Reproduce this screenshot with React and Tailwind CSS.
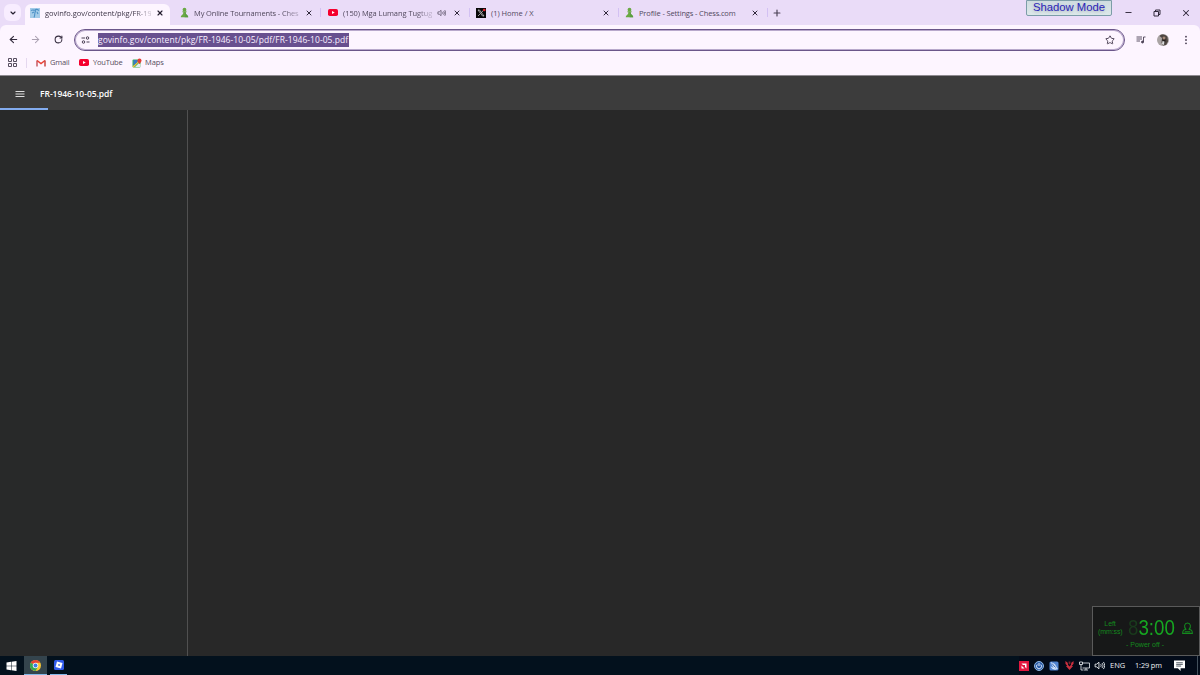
import React from "react";
import { X, Plus, ArrowLeft, ArrowRight, RotateCw, ChevronDown, Star, Minus } from "lucide-react";

const PawnIcon = () => (
  <svg viewBox="0 0 10 12" className="h-[11px] w-[9px] shrink-0">
    <circle cx="5" cy="2.900" r="2.100" fill="#6aa944" />
    <path d="M2.700 4.700h4.600v1H6.300c0 1.600.6 2.500 1.500 3.200.8.600 1.300 1.200 1.300 2.500H.9c0-1.300.5-1.900 1.300-2.500.9-.7 1.500-1.600 1.500-3.200h-1z" fill="#6aa944" />
    <path d="M6.300 5.700c0 1.600.6 2.500 1.500 3.200.8.600 1.300 1.200 1.300 2.500H5c1.500-1 1-3 .3-5.700z" fill="#5a9d40" />
  </svg>
);

const YoutubeIcon = () => (
  <svg viewBox="0 0 20 14" className="h-[7px] w-[10px] shrink-0" preserveAspectRatio="none">
    <rect width="20" height="14" rx="3.500" fill="#f5002e" />
    <path d="M8 4l5.500 3L8 10z" fill="#fff" />
  </svg>
);

const GovinfoIcon = () => (
  <svg viewBox="0 0 10 10" className="h-[10px] w-[10px] shrink-0">
    <rect width="10" height="10" fill="#a3cbe8" />
    <path d="M1 2.500c2-1.500 3 .5 4-.5s2-1 4 .5M6 2.500C4 4.500 5.500 6 4 9.500M2 5l2-1M7 4l1 2" fill="none" stroke="#4c91c6" strokeWidth="1.100" />
  </svg>
);

const XLogo = () => (
  <svg viewBox="0 0 20 20" className="h-[10px] w-[10px] shrink-0">
    <rect width="20" height="20" fill="#080808" />
    <path d="M4 4h3l9 12h-3zM15.500 4l-5 5.500M8.500 11.500L4 16" fill="none" stroke="#d8d8d8" strokeWidth="1.400" />
    <circle cx="16.500" cy="4" r="2.600" fill="#e5202d" />
  </svg>
);

const SpeakerIcon = ({ className }) => (
  <svg viewBox="0 0 20 16" className={className} fill="none" stroke="currentColor" strokeWidth="1.600">
    <path d="M2 5.500h3L9 2v12L5 10.500H2z" />
    <path d="M12 5.500c1.300 1.500 1.300 3.500 0 5M14.500 3.500c2.500 2.500 2.500 6.500 0 9M17 1.500c3.300 3.500 3.300 9.500 0 13" />
  </svg>
);

const tabs = [
  { icon: PawnIcon, title: "My Online Tournaments - Ches", box: "w-[150px] pl-[9px] pr-[7px]", spacing: "tracking-[-0.12px]", fade: true },
  { icon: YoutubeIcon, title: "(150) Mga Lumang Tugtugi", box: "w-[148px] pl-[7px] pr-[8px]", spacing: "tracking-[-0.06px]", fade: true, audio: true },
  { icon: XLogo, title: "(1) Home / X", box: "w-[148px] pl-[6px] pr-[8px]", spacing: "tracking-[-0.02px]" },
  { icon: PawnIcon, title: "Profile - Settings - Chess.com", box: "w-[148px] pl-[5px] pr-[8px]", spacing: "tracking-[-0.14px]" },
];

const Tab = ({ tab }) => {
  const Icon = tab.icon;
  return (
    <div className={`flex h-[25px] shrink-0 items-center ${tab.box}`}>
      <span className="flex w-[10px] shrink-0 justify-center"><Icon /></span>
      <div className={`ml-[5px] min-w-0 flex-1 whitespace-nowrap leading-4 ${tab.spacing} ${tab.fade ? "[mask-image:linear-gradient(to_right,black_82%,rgba(0,0,0,0.3)_97%)]" : ""}`}>
        {tab.title}
      </div>
      {tab.audio && <SpeakerIcon className="ml-[5px] mr-[4px] h-[8px] w-[9px] shrink-0" />}
      <X size={8} strokeWidth={3} className="ml-[3px] shrink-0 text-[#30283b]" />
    </div>
  );
};

const TabStrip = () => (
  <header className="relative flex h-[25px] shrink-0 bg-[#eadcf8] text-[7.5px] text-[#51485d]">
    <div className="flex w-[25px] shrink-0 items-center justify-center">
      <div className="flex h-[17px] w-[17px] items-center justify-center rounded-[6px] bg-[#f8edff]">
        <ChevronDown size={8} strokeWidth={3.500} className="text-[#251f30]" />
      </div>
    </div>
    <div className="mt-1 flex h-[21px] w-[145px] shrink-0 items-center rounded-t-[6px] bg-[#fdf5ff] pb-[3px] pl-[5px] pr-[6px] text-[#3b3345]">
      <GovinfoIcon />
      <div className="ml-[5px] w-[106px] whitespace-nowrap leading-4 tracking-[-0.02px] [mask-image:linear-gradient(to_right,black_84%,rgba(0,0,0,0.3)_97%)]">
        govinfo.gov/content/pkg/FR-19
      </div>
      <X size={8} strokeWidth={3.500} className="ml-auto shrink-0 text-[#251f30]" />
    </div>
    {tabs.map((tab) => (
      <React.Fragment key={tab.title}>
        <Tab tab={tab} />
        <div className="mt-2 h-[9px] w-px shrink-0 bg-[#d3c1f3]" />
      </React.Fragment>
    ))}
    <Plus size={10} strokeWidth={2.800} className="ml-[4px] mt-[8px] text-[#4b4155]" />
    <div className="absolute left-[1026px] top-0 flex h-4 w-[86px] items-center justify-center rounded-b-[2px] border border-[#7c9da8] bg-gradient-to-b from-[#cfdce0] to-[#dce8e9] font-['Liberation_Sans',sans-serif] text-[11.3px] leading-none text-[#2a26b8] [text-shadow:0_1px_3px_#a5a8b8]">
      Shadow Mode
    </div>
    <div className="ml-auto flex h-[25px] items-center pr-[9px] text-[#30283b]">
      <Minus size={9} strokeWidth={2.500} className="mr-[20px]" />
      <svg viewBox="0 0 8 8" className="mr-[20px] h-2 w-2" fill="none" stroke="currentColor">
        <path d="M1 2.500h4.500v4.500H1zM2.500 2.500V1H7v4.500H5.500" />
      </svg>
      <X size={10} strokeWidth={2.500} />
    </div>
  </header>
);

const AddressBar = () => (
  <div className="flex h-[29px] items-center text-[#4b4155]">
    <ArrowLeft size={11} strokeWidth={2.400} className="ml-2 shrink-0 text-[#342c3e]" />
    <ArrowRight size={11} strokeWidth={2.200} className="ml-[11px] shrink-0 text-[#aaa0b1]" />
    <RotateCw size={9} strokeWidth={2.800} className="ml-[13px] shrink-0 text-[#342c3e]" />
    <div className="ml-[11px] flex h-[22px] w-[1051px] shrink-0 items-center rounded-full border border-[#6b568a] pl-[6px] pr-[9px] ring-1 ring-inset ring-[#b9a9cc]">
      <svg viewBox="0 0 18 16" className="h-2 w-[9px]" fill="none" stroke="currentColor" strokeWidth="2">
        <path d="M1 4h7M11 12h6" />
        <circle cx="13" cy="4" r="2.500" />
        <circle cx="5" cy="12" r="2.500" />
      </svg>
      <span className="ml-[8px] h-[14px] w-[251px] whitespace-nowrap bg-[#68508f] text-[8.5px] leading-[14px] tracking-[0.035px] text-[#f8efff]">
        govinfo.gov/content/pkg/FR-1946-10-05/pdf/FR-1946-10-05.pdf
      </span>
      <Star size={10} strokeWidth={2.300} className="ml-auto" />
    </div>
    <svg viewBox="0 0 20 16" className="ml-[11px] h-2 w-[10px]" fill="none" stroke="currentColor" strokeWidth="1.800">
      <path d="M1 2h11M1 6h11M1 10h7M15 12V2h4" />
      <circle cx="13" cy="12" r="2" fill="currentColor" />
    </svg>
    <svg viewBox="0 0 24 24" className="ml-[11px] h-3 w-3">
      <circle cx="12" cy="12" r="12" fill="#aaa4a4" />
      <path d="M5 4C10-1 18 1 21 6l1 9-4 7-6 1-3-6 1-9z" fill="#4d4541" />
      <path d="M11 8h6v6l-2 6-4-3z" fill="#25201f" />
      <circle cx="14" cy="8" r="3" fill="#a6897a" />
      <path d="M11 14l4 1-1 7-4-2z" fill="#dddede" />
    </svg>
    <svg viewBox="0 0 4 12" className="ml-[15px] h-[10px] w-[4px]" fill="#4b4155">
      <circle cx="2" cy="2" r="1.100" />
      <circle cx="2" cy="6" r="1.100" />
      <circle cx="2" cy="10" r="1.100" />
    </svg>
  </div>
);

const Bookmarks = () => (
  <div className="flex h-[17px] items-center text-[7.5px] text-[#574e60]">
    <svg viewBox="0 0 18 18" className="ml-2 h-[9px] w-[9px]" fill="none" stroke="currentColor" strokeWidth="2">
      <path d="M1 1h6v6H1zM11 1h6v6h-6zM1 11h6v6H1zM11 11h6v6h-6z" />
    </svg>
    <div className="ml-[9px] h-[10px] w-px bg-[#e5d8ef]" />
    <svg viewBox="0 0 20 16" className="ml-[9px] h-2 w-[10px]" fill="none" strokeWidth="3">
      <path d="M2 15V3" stroke="#c65a65" />
      <path d="M2 3l8 6 8-6" stroke="#e94135" />
      <path d="M18 15V3" stroke="#c94443" />
    </svg>
    <span className="ml-1 w-[20px] whitespace-nowrap tracking-[-0.2px]">Gmail</span>
    <span className="ml-[9px] flex"><YoutubeIcon /></span>
    <span className="ml-1 w-[29px] whitespace-nowrap tracking-[-0.2px]">YouTube</span>
    <svg viewBox="0 0 20 20" className="ml-[10px] h-[10px] w-[10px]">
      <rect x="1" y="3" width="16" height="16" rx="2" fill="#3eae57" />
      <path d="M6 18l8-8 3 3v5z" fill="#e3eaed" />
      <path d="M2 18L15 5" stroke="#f7c13c" strokeWidth="3" />
      <path d="M3 4h8v4l-8 7z" fill="#3979c8" />
      <path d="M15 1a4 4 0 0 1 4 4c0 3-4 7-4 7s-4-4-4-7a4 4 0 0 1 4-4z" fill="#e43d35" />
    </svg>
    <span className="ml-[3px] tracking-[-0.1px]">Maps</span>
  </div>
);

const PowerTimer = () => (
  <aside className="absolute bottom-[19px] right-0 flex h-[50px] w-[108px] flex-col border border-[#5a5a5a] bg-[#171818] font-['Liberation_Sans',sans-serif] text-[#148a1e]">
    <div className="flex h-[34px] items-center pt-[8px]">
      <div className="ml-[5px] w-[24px] text-center text-[7px] leading-[8px] tracking-[-0.1px]">
        <div>Left</div>
        <div className="whitespace-nowrap">(mm:ss)</div>
      </div>
      <div className="ml-[6px] flex w-[48px] origin-left scale-x-[0.85] items-center whitespace-nowrap text-[22px] leading-[20px] text-[#16a621]">
        <span className="w-[13px] text-[#193a1c]">8</span>
        <span>3:00</span>
      </div>
      <svg viewBox="0 0 20 24" className="ml-[6px] h-[13px] w-[11px]" fill="none" stroke="#148a1e" strokeWidth="1.900">
        <path d="M7 13C3 9 4 2 10 2s7 7 3 11v1c4 0 6 2 6 7H1c0-5 2-7 6-7zM5 18h10" />
      </svg>
    </div>
    <div className="pr-[2px] text-center text-[7px] leading-[8px]">- Power off -</div>
  </aside>
);

const ChromeLogo = () => (
  <svg viewBox="0 0 24 24" className="h-[11px] w-[11px]">
    <circle cx="12" cy="12" r="12" fill="#f7c534" />
    <path d="M12 12L1.600 6A12 12 0 0 1 22.400 6H12z" fill="#e64235" />
    <path d="M12 12L1.600 6A12 12 0 0 0 12 24l5-9z" fill="#35a853" />
    <circle cx="12" cy="12" r="6" fill="#f7f7f7" />
    <circle cx="12" cy="12" r="4.300" fill="#3c7ee5" />
  </svg>
);

const Taskbar = () => (
  <footer className="flex h-[19px] shrink-0 items-center bg-[#03111d] text-[7.5px] text-[#edf1f5]">
    <svg viewBox="0 0 20 20" className="ml-[6px] h-[10px] w-[11px]" fill="#fff">
      <path d="M0 3l9-1.300V9.500H0zM10 1.500L20 0v9.500H10zM0 10.500h9v7.800L0 17zM10 10.500h10V20l-10-1.500z" />
    </svg>
    <div className="ml-[7px] flex h-[19px] w-[23px] items-center justify-center border-b border-[#83b8e8] bg-[#34444d]">
      <ChromeLogo />
    </div>
    <div className="ml-[3px] flex h-[19px] w-[17px] items-center justify-center border-b border-[#83b8e8]">
      <svg viewBox="0 0 20 20" className="h-[10px] w-[10px]">
        <rect width="20" height="20" rx="3" fill="#315bea" />
        <path d="M6 3l11 3-3 11-11-3z" fill="#fff" />
        <path d="M9 8l3 .8-.8 3-3-.8z" fill="#315bea" />
      </svg>
    </div>
    <div className="ml-auto flex h-full items-center bg-[#030b19]">
      <svg viewBox="0 0 20 20" className="h-[10px] w-[10px]">
        <rect width="20" height="20" fill="#e1173f" />
        <path d="M5 5h10v10l-3-3V8H8zM5 9v6h6l-3-3z" fill="#fff" />
      </svg>
      <svg viewBox="0 0 20 20" className="ml-[5px] h-[10px] w-[10px]">
        <circle cx="10" cy="10" r="9" fill="#2c5ca6" stroke="#91b6df" strokeWidth="2" />
        <path d="M10 4v6M6.500 7a5 5 0 1 0 7 0" fill="none" stroke="#dceaff" strokeWidth="2" />
      </svg>
      <svg viewBox="0 0 20 20" className="ml-[5px] h-[10px] w-[10px]">
        <rect x="1" y="1" width="18" height="18" rx="3" fill="#4f83d1" />
        <path d="M4 3l7 3 6 10-7-2zM4 11c2 6 7 6 11 6" fill="#dbeaff" stroke="#dbeaff" />
        <path d="M6 5l7 8" stroke="#3164b5" strokeWidth="2" />
      </svg>
      <svg viewBox="0 0 20 22" className="ml-[6px] h-[11px] w-[9px]">
        <path d="M1 1l5 4 1 5 3 3 3-3 1-5 5-4v6l-4 5h3l-8 9-8-9h3L1 7z" fill="#c92f3e" />
        <path d="M8 2h4v5l-2 2-2-2z" fill="#75212d" />
      </svg>
      <svg viewBox="0 0 22 20" className="ml-[5px] h-[10px] w-[11px]" fill="none" stroke="currentColor" strokeWidth="1.600">
        <path d="M7 4h14v10H7M14 14v4M9 18h9M1 2h6v5H1zM4 7v11h4" />
      </svg>
      <SpeakerIcon className="ml-[4px] h-[9px] w-[11px]" />
      <span className="ml-[5px] w-[16px] whitespace-nowrap text-[7.500px]">ENG</span>
      <span className="ml-[9px] w-[27px] whitespace-nowrap text-[7.300px] tracking-[-0.1px]">1:29 pm</span>
      <svg viewBox="0 0 20 20" className="ml-[12px] mr-[12px] h-[11px] w-[11px]">
        <path d="M0 1h20v14h-8v5l-5-5H0z" fill="#fff" />
        <path d="M4 5h12M4 8h12M4 11h9" stroke="#15202e" strokeWidth="1.300" />
      </svg>
      <div className="h-full w-[3px] border-l border-[#43505c]" />
    </div>
  </footer>
);

export default function App() {
  return (
    <div className="relative flex h-[675px] w-[1200px] flex-col overflow-hidden bg-[#eadcf8] font-['Open_Sans','Noto_Sans',sans-serif]">
      <TabStrip />
      <div className="h-[50px] shrink-0 rounded-t-[6px] bg-[#fdf5ff]">
        <AddressBar />
        <Bookmarks />
      </div>
      <main className="flex min-h-0 flex-1 flex-col bg-[#282828]">
        <div className="flex h-[35px] shrink-0 flex-col border-t border-[#8e8a90] bg-[#3c3c3c]">
          <div className="flex flex-1 items-center pt-[4px]">
            <svg viewBox="0 0 10 8" className="-mt-px ml-[15px] h-2 w-[10px]" stroke="#ddd">
              <path d="M.5 1.500h9M.5 4h9M.5 6.500h9" />
            </svg>
            <span className="ml-[15px] text-[8.500px] font-semibold tracking-[-0.04px] text-white">FR-1946-10-05.pdf</span>
          </div>
          <div className="h-[2px] w-[48px] bg-[#83acef]" />
        </div>
        <div className="flex min-h-0 flex-1">
          <div className="w-[188px] border-r border-[#505050] bg-[#282929]" />
          <div className="flex-1 bg-[#282828]" />
        </div>
      </main>
      <Taskbar />
      <PowerTimer />
    </div>
  );
}
